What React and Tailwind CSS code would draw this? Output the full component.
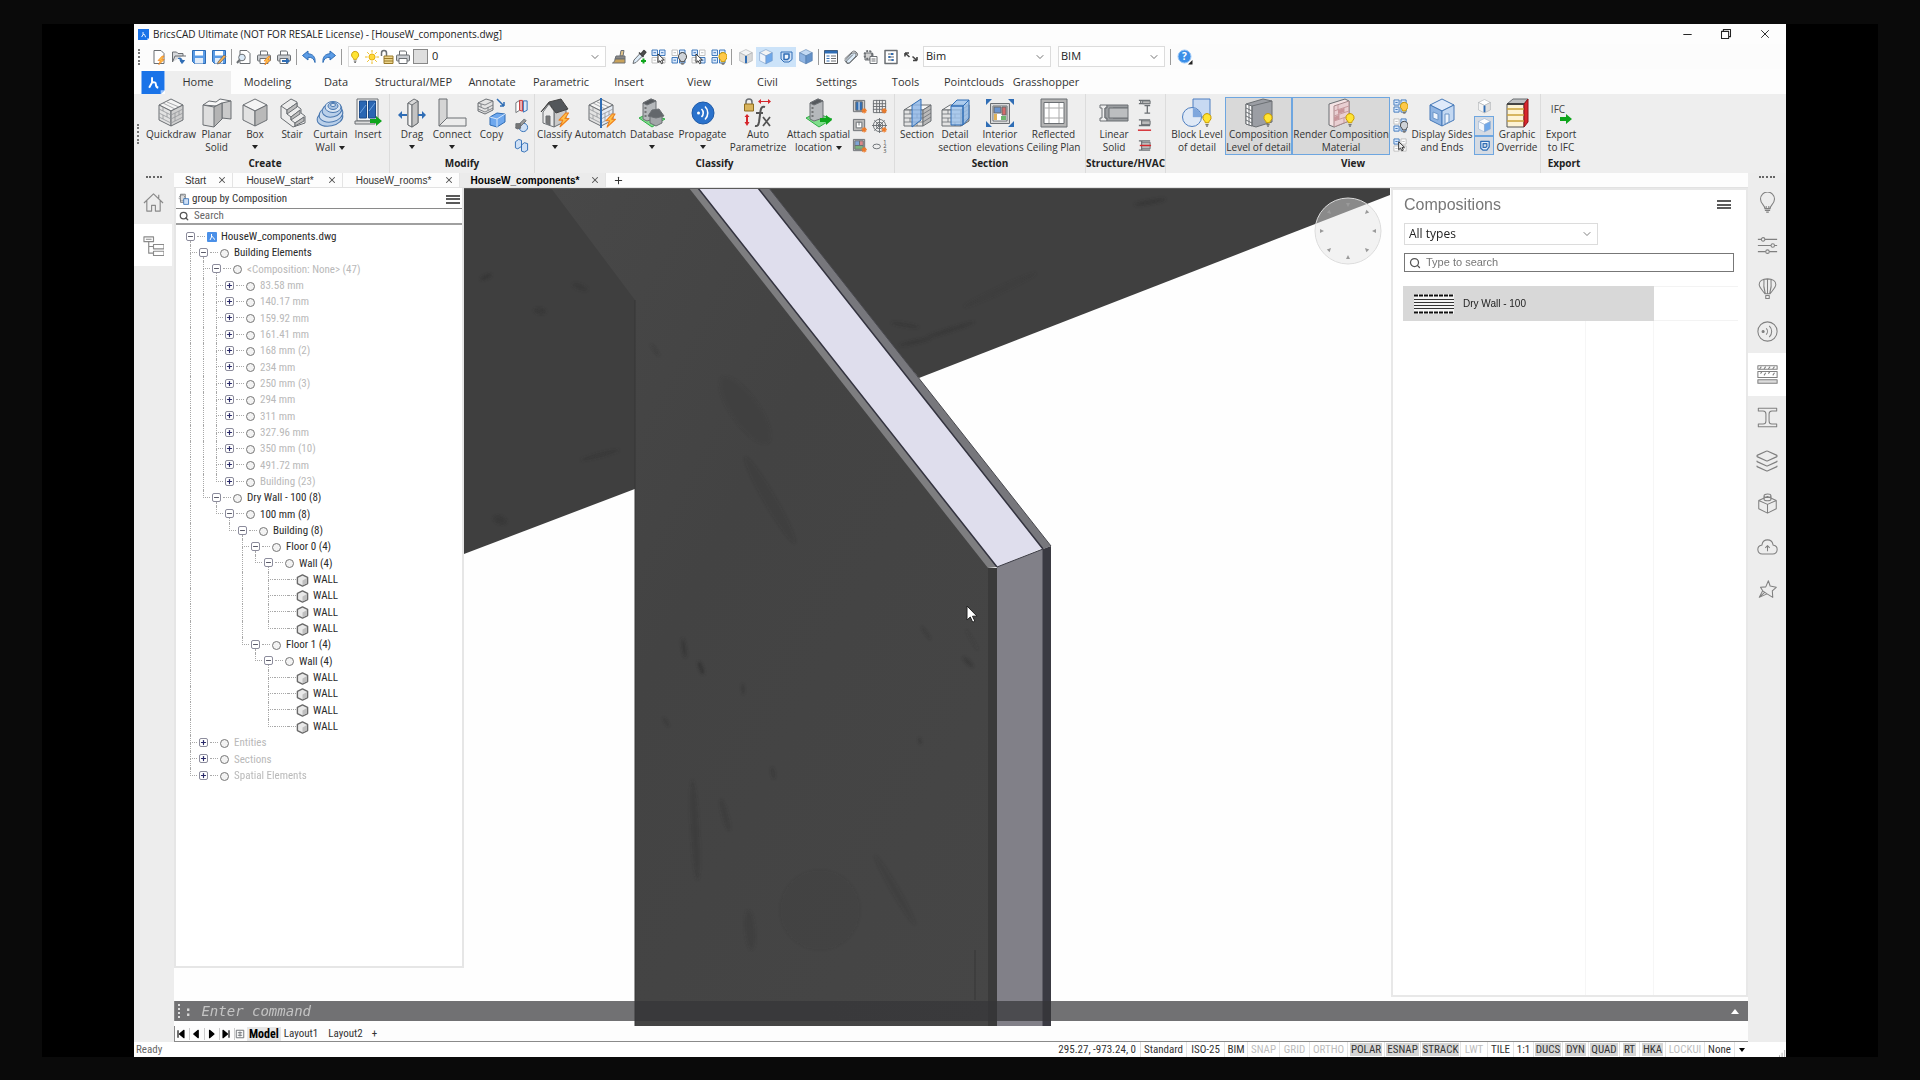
import React from "react";
import { ChevronDown, Layers, Minus, Plus, Search, X } from "lucide-react";

/* ---------- shared drawing helpers ---------- */
const G = "#6b6f73";
const B = "#2f6db5";

const Svg = ({ box = 16, className = "size-4", children, ...rest }) => (
  <svg viewBox={`0 0 ${box} ${box}`} className={`shrink-0 ${className}`} fill="none" stroke={G} strokeWidth="1" strokeLinejoin="round" aria-hidden="true" {...rest}>
    {children}
  </svg>
);

const Cube = ({ top = "#f4f4f4", left = "#e2e2e2", right = "#b9b9b9", line = G, transform }) => (
  <g stroke={line} transform={transform}>
    <path d="M15 1 27 7 15 13 3 7Z" fill={top} />
    <path d="M3 7 15 13V28L3 22Z" fill={left} />
    <path d="M27 7 15 13V28L27 22Z" fill={right} />
  </g>
);
const Bulb = ({ x = 0, y = 0, fill = "#ffe433", line = "#c99a00" }) => (
  <g transform={`translate(${x} ${y})`} stroke={line}>
    <path d="M5 .5a4.2 4.2 0 0 0-2.6 7.4c.6.6.8 1 .8 1.8h3.6c0-.8.2-1.2.8-1.8A4.2 4.2 0 0 0 5 .5Z" fill={fill} />
    <path d="M3.4 11.6h3.2M4 13.2h2" stroke="#777" strokeWidth="1.3" />
  </g>
);
const Bolt = ({ x = 0, y = 0, s = 1 }) => (
  <path transform={`translate(${x} ${y}) scale(${s})`} d="M6 0 0 6.5h3.4L1 12.5 9 5H5.4L8.6 0Z" fill="#ffc04a" stroke="#ef7f1a" />
);
const GreenArrow = ({ x = 0, y = 0 }) => (
  <path transform={`translate(${x} ${y})`} d="M0 3h6V0l6 5-6 5V7H0Z" fill="#0fa51c" stroke="none" />
);
const Spark = ({ x, y }) => (
  <path transform={`translate(${x} ${y})`} d="M3 0v6M0 3h6M1 1l4 4M5 1 1 5" stroke="#f07a26" strokeWidth="1.1" />
);

const Logo = ({ className }) => (
  <Svg box={24} className={className} stroke="none">
    <path d="M0 0H24V20L20 24H0Z" fill="#1a73e8" />
    <path d="M24 20 20 24V20Z" fill="#9cc5ff" />
    <path d="M11 6.500V12L8 17.500M11 12c3-1 4 .4 4 2 0 1.800.8 3 2.500 3.500" stroke="#fff" strokeWidth="2" />
  </Svg>
);

/* ---------- quick access toolbar icons ---------- */
const Page = ({ d = "M3 1.500h7l3 3v10H3Z" }) => <path d={d} fill="#fff" />;
const Printer = () => (
  <>
    <path d="M4.500 6V2h6l1 1v3" fill="#fff" />
    <rect x="1.500" y="6" width="13" height="6" rx="1" fill="#c9ccd0" />
    <rect x="4" y="9.500" width="8" height="5" fill="#fff" />
  </>
);
const Floppy = () => (
  <>
    <path d="M1.500 1.500h13v13h-11l-2-2Z" fill="#5b9ce6" stroke={B} />
    <rect x="4" y="2" width="8" height="4.500" fill="#fff" stroke="none" />
    <rect x="4" y="9" width="8" height="5.500" fill="#e3ecf7" stroke="none" />
  </>
);
const MiniGrid = ({ off = [] }) => (
  <g strokeWidth=".9">
    {[[1, 1], [8.5, 1], [1, 8.5], [8.5, 8.5]].map(([x, y], i) => (
      <g key={i} stroke={off.includes(i) ? "#b9b9b9" : B}>
        <rect x={x} y={y} width="5.500" height="5.500" fill={off.includes(i) ? "#fff" : "#dbeafd"} />
        <path d={`M${x + 1.5} ${y + 2.7}h2.500`} />
      </g>
    ))}
  </g>
);
const Cursor = ({ x = 0, y = 0, fill = "#fff" }) => (
  <path transform={`translate(${x} ${y})`} d="M0 0v8.500l2-1.800 1.500 3 1.500-.8-1.400-2.800 2.700-.2Z" fill={fill} stroke="#222" strokeWidth=".9" />
);

const TB = {
  "New": <><Page /><Bolt x={7} y={7} s={0.7} /></>,
  "Open": <><path d="M1.500 13V3h4l1.500 1.500h5V7" fill="#d7d9dc" /><path d="M1.500 13 4 7h11" /><path d="M7 9.500c3-1 4 0 4 2.500M9 11.500l2 3 2.500-3Z" stroke={B} fill={B} /></>,
  "Save": <Floppy />,
  "Save as": <><Floppy /><path d="m7 13 6-7 2 1.500-6 6.500-2.500 1Z" fill="#ffb14a" stroke="#777" /></>,
  "Preview": <><Page d="M4 1.500h7l3 3v10H4Z" /><circle cx="6" cy="8.500" r="3.300" fill="#dcebf8" /><path d="m3.500 11-2.500 3" strokeWidth="2" /></>,
  "Print": <><Printer /><Bolt x={8} y={7.5} s={0.7} /></>,
  "Publish": <><Printer /><path d="M6 11h4V9l4 3-4 3v-2H6Z" fill={B} stroke="none" /></>,
  "Undo": <path d="M7 2 1.500 6.500 7 11V8.300c4-.2 6 1.500 7 5.200.6-5.500-2-8.500-7-8.800Z" fill="#5b9ce6" stroke={B} />,
  "Redo": <path d="m9 2 5.500 4.500L9 11V8.300c-4-.2-6 1.500-7 5.200C1.400 8 4 5 9 4.700Z" fill="#5b9ce6" stroke={B} />,
  "Match properties": <><path d="M10 1.500 9 7h3l1-5.500Z" fill="#e2c48a" /><path d="M5 7h9v3H4Z" fill="#888" /><path d="M4 10h10v4H1.500c2-1 2.500-2.500 2.500-4Z" fill="#c9a25a" /></>,
  "Eyedropper": <><path d="M2 14.500 3 11l6-6.500 2.500 2.500-6.500 6.500Z" fill="#dcebf8" /><path d="m8 3.500 4.500 4.500M10 5l3-3.500 1.800 1.800L12 6.500" stroke="#444" fill="#555" strokeWidth="1.600" /><path d="M12.500 9.500v5M10 12h5" stroke="#0fa51c" strokeWidth="2" /></>,
  "Select similar": <><MiniGrid off={[2, 3]} /><Cursor x={7} y={5} /></>,
  "Hide": <><MiniGrid off={[0]} /><Bulb x={6.5} y={3} fill="#cfd3d8" line="#444" /></>,
  "Isolate": <><MiniGrid off={[1, 2]} /><Cursor x={5} y={5} /></>,
  "Show all": <><MiniGrid /><Bulb x={7} y={3} fill="#ffc94a" /></>,
  "Edge": <><g transform="scale(.53)"><Cube line="#a0a4a8" right="#d8d8d8" /></g><path d="M8 7v7" stroke={B} strokeWidth="2" /></>,
  "Face": <g transform="scale(.53)"><Cube right="#6fa8ea" line="#6d93c2" left="#eef4fc" /></g>,
  "Boundary": <><path d="M3 3h11v7.500L11 13H6L3 10Z" fill="#cfe2f8" stroke={B} /><path d="M6 5h5v4l-1.500 1.500H6Z" fill="#eef5fd" stroke={B} strokeWidth="1.500" /></>,
  "Solid": <g transform="scale(.53)"><Cube top="#c3d9f3" left="#8fb4e2" right="#6592c9" line="#4a74a6" /></g>,
  "Properties": <><rect x="1.500" y="1.500" width="13" height="13" fill="#fff" stroke="#555" /><path d="M1.500 3h13" stroke={B} strokeWidth="3" /><path d="M3.500 7h3M3.500 9.500h3M3.500 12h3" stroke={B} /><path d="M8 7h5M8 9.500h5M8 12h5" /></>,
  "Attach": <><path d="M2 11.500 9 4l4 0v3L6.500 14 4 14.500Z" fill="#dcebf8" /><path d="M1.500 10 9.500 2.500c1.500-1 3.500 0 4.500 1.500s.5 2.500 0 3L6.500 14c-1.500 1-3.500-.5-3-2L10 5.500" /></>,
  "Sheets": <><path d="M2 4h7v7H2Z" fill="#d3d3d3" /><circle cx="5.500" cy="6" r="4" strokeWidth="2" strokeDasharray="2 1.200" /><rect x="7" y="7.500" width="7" height="7" fill="#fff" /><path d="M8.500 10h4M8.500 12h4" /></>,
  "Options": <><rect x="2" y="1.500" width="12" height="13" fill="#fff" strokeWidth="1.500" /><path d="M5 5h6M5 8h6M5 11h6" /><path d="M9 4v2M6.500 7v2M9.500 10v2" stroke={B} strokeWidth="2" /></>,
  "Resize": <path d="M2 4h4M2 4v3.500M2 4l4.500 4M14 11.500h-4M14 11.500V8M14 11.500l-4.500-4" stroke="#444" strokeWidth="1.600" />,
  "Help": <><circle cx="7.500" cy="7.500" r="6.500" fill="#3b8fe8" stroke="#9cc8f7" /><text x="7.500" y="11" fontSize="10" fontWeight="700" textAnchor="middle" fill="#fff" stroke="none" className="font-['Open_Sans',sans-serif]">?</text><path d="M15.500 11v4.500H11Z" fill="#222" stroke="none" /></>,
};

const ToolBtn = ({ name, on }) => (
  <button type="button" aria-label={name} className={`flex h-5 w-5 items-center justify-center ${on ? "bg-[#cce3f9]" : ""}`}>
    <Svg>{TB[name]}</Svg>
  </button>
);
const Tools = ({ names, on = [] }) => names.map((n) => <ToolBtn key={n} name={n} on={on.includes(n)} />);
const Sep = () => <span className="mx-[2px] h-4 w-px bg-[#9a9a9a]" />;
const Grip = ({ className = "" }) => <span className={`border-l-2 border-dotted border-[#777] ${className}`} />;

const Combo = ({ label, value, className }) => (
  <label className={`flex h-[21px] items-center border border-[#dcdcdc] bg-white pr-1 ${className}`}>
    <select aria-label={label} className="min-w-0 flex-1 appearance-none bg-transparent pl-[2px] outline-none">
      <option>{value}</option>
    </select>
    <ChevronDown className="size-3 text-[#444]" strokeWidth={1.5} />
  </label>
);

function QuickToolbar() {
  return (
    <div className="flex h-[25px] items-center bg-[#fcfcfc] pl-1 text-[11px] text-[#222]">
      <Grip className="mr-[9px] h-4" />
      <Tools names={["New", "Open", "Save", "Save as"]} />
      <Sep />
      <Tools names={["Preview", "Print", "Publish"]} />
      <Sep />
      <Tools names={["Undo", "Redo"]} />
      <Sep />
      <div className="ml-1 flex h-[21px] w-[258px] items-center border border-[#dcdcdc] bg-white pr-1">
        <Svg className="size-[14px]"><Bulb x={2} y={1} /></Svg>
        <Svg className="ml-[2px] size-[14px]"><circle cx="8" cy="8" r="3.500" fill="#ffd83a" stroke="#e0a800" /><path d="M8 0v3M8 13v3M0 8h3M13 8h3M2.500 2.500l2 2M11.500 11.500l2 2M13.500 2.500l-2 2M4.500 11.500l-2 2" stroke="#e9b200" /></Svg>
        <Svg className="size-4"><path d="M2.500 7V4a2.500 2.500 0 0 1 5 0v3" strokeWidth="1.500" /><rect x="5" y="7" width="9" height="7.500" fill="#ecd58c" stroke="#9a7a2a" /><path d="M5 9.500h9M5 12h9" stroke="#9a7a2a" /></Svg>
        <Svg className="size-4"><Printer /></Svg>
        <span className="ml-[2px] size-[15px] border border-[#888] bg-[#dedede]" />
        <select aria-label="Layer" className="ml-1 min-w-0 flex-1 appearance-none bg-transparent outline-none">
          <option>0</option>
        </select>
        <ChevronDown className="size-3 text-[#444]" strokeWidth={1.5} />
      </div>
      <span className="w-[3px]" />
      <Tools names={["Match properties", "Eyedropper", "Select similar", "Hide", "Isolate", "Show all"]} />
      <Sep />
      <span className="w-[2px]" />
      <Tools names={["Edge", "Face", "Boundary", "Solid"]} on={["Face", "Boundary"]} />
      <Sep />
      <Tools names={["Properties", "Attach", "Sheets", "Options", "Resize"]} />
      <Combo label="Workspace" value="Bim" className="ml-[2px] w-[128px]" />
      <Combo label="Interface" value="BIM" className="ml-[7px] w-[107px]" />
      <span className="w-[3px]" />
      <Sep />
      <span className="w-[2px]" />
      <Tools names={["Help"]} />
    </div>
  );
}

/* ---------- ribbon icons (30 x 30) ---------- */
const brick = <path d="M3 11l12 6 12-6M3 15l12 6 12-6M3 19l12 6 12-6M7 9v4M11 15v4M7 17v4M19 15v4M23 13v4M19 19v4M11 4l12 5M7 5l12 6" stroke="#94979a" strokeWidth=".8" />;
const wallBlock = (
  <>
    <path d="M2 12 10 7H29L21 12Z" fill="#f5f5f5" />
    <path d="M2 12H21V28H2Z" fill="#e3e3e3" />
    <path d="M21 12 29 7V23L21 28Z" fill="#b9b9b9" />
    <path d="M2 16h19l8-5M2 20h19l8-5M2 24h19l8-5M8 12v4M15 16v4M8 20v4M15 24v4" strokeWidth=".8" />
  </>
);
const house = (
  <>
    <path d="M14 13 26 8V23L14 29Z" fill="#c9c9c9" />
    <path d="M3 14V25L14 29V13L9 6Z" fill="#eaeaea" />
    <path d="M1 14 9 4 21 1 28 11 16 15 9 5Z" fill="#53575b" stroke="#444" />
    <path d="M6 18h4v9l-4-2Z" fill="#777" />
  </>
);
const buildings = (
  <>
    <path d="M2 20 12 15 28 21 15 29Z" fill="#7fdc8b" stroke="#2fae45" />
    <path d="M6 5 14 1 19 3V20L10 23 6 21Z" fill="#b5b8bb" />
    <path d="M6 5 14 1 19 3 10 7Z" fill="#55595d" />
    <path d="M7.500 10h2M7.500 14h2M7.500 18h2" stroke="#333" />
  </>
);

const RI = {
  Quickdraw: <><Cube right="#cfcfcf" />{brick}</>,
  "Planar Solid": <><path d="M1 7 7 3 14 4 18 1 29 3 19 9 14 8Z" fill="#f7f7f7" /><path d="M1 7 12 9 20 5V21L12 29 1 27Z" fill="#dedede" /><path d="M20 5 29 3V21L20 20Z" fill="#cacaca" /><path d="M12 9 20 5V21L12 29Z" fill="#b4b4b4" /></>,
  Box: <Cube />,
  Stair: <><path d="M4 8 14 1 20 4V8l4 3v4l4 3v7L16 29 4 20Z" fill="#ededed" /><path d="M4 8 10 12 20 5M10 12v4l4 3 8-6M14 19v3l4 3 9-6M18 25v3.500" /><path d="M10 12 20 5v4l-10 7ZM14 19l9-7v4l-9 6ZM18 25l9-6v4l-9 5Z" fill="#bdbdbd" /></>,
  "Curtain Wall": <g stroke="#4a78b0"><ellipse cx="14" cy="20" rx="13" ry="8" fill="#b9cfe9" transform="rotate(-12 14 20)" /><ellipse cx="15" cy="16" rx="12" ry="8" fill="#cddcee" transform="rotate(-12 15 16)" /><ellipse cx="16" cy="12" rx="10" ry="7" fill="#b9cfe9" transform="rotate(-14 16 12)" /><ellipse cx="17" cy="9" rx="8" ry="5.500" fill="#dbe6f3" /><ellipse cx="17" cy="8" rx="5" ry="3.500" fill="#a9c3e2" /><ellipse cx="17" cy="7" rx="2.500" ry="1.500" fill="#e8eff8" /></g>,
  Insert: <><rect x="4" y="1" width="21" height="22" fill="#f3f3f3" /><rect x="6.500" y="3" width="7" height="17" fill="#2a66b3" stroke="#1c4b8a" /><rect x="15.500" y="3" width="7" height="17" fill="#2a66b3" stroke="#1c4b8a" /><path d="M7 15 13 7M16 13l6-8" stroke="#6fa3e0" /><rect x="2" y="23" width="20" height="3" fill="#ddd" /><GreenArrow x={17} y={18} /></>,
  Drag: <><path d="M11 5 17 1 21 3V25L15 29 11 27Z" fill="#d9d9d9" /><path d="M11 5 15 7V29L11 27Z" fill="#f4f4f4" /><path d="M15 7 21 3V25L15 29Z" fill="#c3c3c3" /><path d="M1 17 5 13V16H10V18H5V21ZM29 17 25 13V16H21V18H25V21Z" fill={B} stroke="none" /></>,
  Connect: <><path d="M2 1H10V20L2 28Z" fill="#d5d5d5" /><path d="M2 28 10 20H29V28Z" fill="#ececec" /></>,
  Copy: <><path d="M1 5 9 1 16 3V12L8 16 1 13Z" fill="#e3e3e3" /><path d="M1 8l7 3 8-4M1 11l7 3 8-4M4 6v3M11 9v3M1 5l7 2 8-4" strokeWidth=".8" /><path d="M20 1 27 8M27 8V4M27 8H23" stroke={B} strokeWidth="1.500" /><path d="M13 19 20 15 28 16V24L20 29 13 27Z" fill="#6ea8ee" stroke={B} /><path d="M13 19 20 21 28 16M20 21v8" stroke="#d5e6fa" /></>,
  Classify: <>{house}<Bolt x={19} y={15} s={1.1} /></>,
  Automatch: <><Cube right="#e5ecf5" />{brick}<path d="M15 0V30" stroke={B} strokeWidth="2" /><Bolt x={20} y={16} s={1.05} /></>,
  Database: <>{buildings}<path d="M13 17 20 12 25 18V25L19 28 13 25Z" fill="#a3a6a9" /><path d="M11 18 15 12 22 11 27 18 19 20Z" fill="#63676b" /></>,
  Propagate: <><circle cx="15" cy="15" r="11" fill="#2a72cc" stroke="#1f5ba8" /><circle cx="10.500" cy="15" r="1.500" fill="#fff" stroke="none" /><path d="M13.500 11a5.500 5.500 0 0 1 0 8M17 8.500a9 9 0 0 1 0 13" stroke="#fff" strokeWidth="1.600" /></>,
  "Auto Parametrize": <><path d="M3 6V4a3 3 0 0 1 6 0v2" strokeWidth="1.500" /><rect x="1.500" y="6" width="9" height="7" fill="#d9b45c" stroke="#8f6d1e" /><path d="M15 3.500 18 1V3h7V1l3 2.500L25 6V4H18V6ZM4 16l2.500 3H5v5h1.500L4 28l-2.500-4H3V19H1.500Z" fill="#d5262c" stroke="none" /><path d="M22 9c-3-1-4 1-4.500 4L16 24c-.5 3-1.500 4.500-4 4M13 15h7" stroke="#555" strokeWidth="2" /><path d="m20 19 7 9M27 19l-7 9" stroke="#555" strokeWidth="1.800" /></>,
  "Attach spatial location": <>{buildings}<GreenArrow x={16} y={17} /></>,
  Section: <>{wallBlock}<path d="M10 7 19 1V22L10 29Z" fill="#8db6e8" fillOpacity=".8" stroke={B} /></>,
  "Detail section": <>{wallBlock}<path d="M11 8 17 2H29L23 8ZM11 8H23V27H11ZM23 8 29 2V20L23 27Z" fill="#9cc3ee" fillOpacity=".8" stroke={B} /></>,
  "Interior elevations": <><path d="M1 1H7L1 7ZM29 1V7L23 1ZM1 29V23L7 29ZM29 29H23L29 23Z" fill={B} stroke="none" /><rect x="5.500" y="5.500" width="19" height="20" fill="#d9d9d9" /><rect x="8" y="8" width="14" height="15" fill="#fff" /><path d="M9 9h7v6H9Z" fill="#6a95cf" stroke="#666" /><path d="M17 9h4v8h-4Z" fill="#d46a6a" stroke="#666" /><path d="M9 16h3v6H9Z" fill="#e0b35a" stroke="none" /><path d="M16 18h5v4h-5Z" fill="#6fb76f" stroke="none" /></>,
  "Reflected Ceiling Plan": <><rect x="2" y="1" width="26" height="28" fill="#b5b5b5" /><rect x="5" y="4.500" width="20" height="21" fill="#fff" /><path d="M10 5v20M20 5v20M5 10h20M5 20h20" stroke="#aaa" /></>,
  "Linear Solid": <><path d="M1 7H8V10H6V20H8V23H1V20H3V10H1Z" fill="#eee" /><path d="M8 7H29V10H14V20H29V23H8V20H6V10H8Z" fill="#9a9da0" /><path d="M10 10H29V20H10Z" fill="#bcbec0" /></>,
  "Block Level of detail": <><path d="M11 1H28V19H11Z" fill="#c7d9f2" stroke="#4f7fc0" /><circle cx="10" cy="19" r="9.500" fill="#dbe7f8" fillOpacity=".8" stroke="#4f7fc0" /><path d="M11 10a9.500 9.500 0 0 1 8.500 9H11Z" fill="#7fa7dd" stroke="none" /><Bulb x={20} y={15} /></>,
  "Composition Level of detail": <><path d="M2 6 19 1 28 3V24L12 29 2 26Z" fill="#9b9ea4" /><path d="M2 6 8 8V28L2 26Z" fill="#fff" /><path d="M2 10l6 3M2 14l6 3M2 18l6 3M2 22l6 3M5 7v20" /><path d="M8 8 28 3M8 8V28" /><Bulb x={19} y={15} /></>,
  "Render Composition Material": <><path d="M3 6 19 1 23 3V23L8 29 3 27Z" fill="#f3e3e4" /><path d="M8 8 23 3V23L8 29Z" fill="#e9cfd2" stroke="#a98a8d" /><path d="M8 13l15-5M8 18l15-5M8 23l15-5M12 7v5M18 10v5M13 17v4M18 20v5" stroke="#c79b9f" /><path d="M12 12l6-2v4l-6 2ZM8 19l5-2v4l-5 2Z" fill="#c9969b" stroke="none" /><Bulb x={19} y={15} /></>,
  "Display Sides and Ends": <><Cube top="#dfeafa" left="#8fb4e2" right="#c3d8f2" line="#4679b8" /><path d="M18 16h4v8l-4 2ZM6 14l5 2v6l-5-2Z" fill="#eef4fc" stroke="#6c96c8" /></>,
  "Graphic Override": <><path d="M5 6 11 1H26L22 6Z" fill="#bfc1c3" /><path d="M5 6H22V29H5Z" fill="#fdf3d5" stroke="#555" /><path d="M22 6 26 1V24L22 29Z" fill="#d9262c" stroke="#8d1418" /><path d="M5 11h17M5 17h17M5 23h17" stroke="#caa23a" strokeWidth="1.500" /><path d="M5 6h17" stroke="#444" strokeWidth="2" /></>,
  "Export to IFC": <><text x="12" y="15" fontSize="10" textAnchor="middle" fill="#444" stroke="none" className="font-['Open_Sans',sans-serif]">IFC</text><GreenArrow x={14} y={16} /></>,
};

const SI = {
  "Thicken": <><path d="M2 4 6 1.500V12L2 14.500Z" fill="#fff" /><path d="M6 1.500h3V13L6 12Z" fill="#f2b8b8" stroke="#c33" /><path d="M10 2h4v10l-4 2Z" fill="#dbe8f8" stroke={B} /></>,
  "Trim": <><circle cx="10" cy="10" r="4.500" fill="#cfe0f5" stroke={B} /><path d="M2 10 11 1l2 2-9 9Z" fill="#999" /><path d="M2 6h5v5H2Z" fill="#777" /></>,
  "Mirror": <path d="M1.500 4 5 1.500l3 1V9L4 11.500l-2.500-1ZM8 7.500 11 5l3.500 1v7L11 15l-3-1Z" fill="#cfe0f5" stroke={B} />,
  "Window": <><rect x="1.500" y="1.500" width="12" height="12" fill="#ccc" /><path d="M4 3h7v9H4Z" fill={B} /><path d="M7.500 3v9" stroke="#fff" /><Spark x={10} y={9.5} /></>,
  "Room": <><rect x="1.500" y="1.500" width="12" height="12" fill="#bbb" /><path d="M4.500 4.500h6v6h-6Z" fill="#fff" /><path d="M7.500 4v4" /><Spark x={10} y={9.5} /></>,
  "Space": <><rect x="1.500" y="1.500" width="12" height="12" fill="#ccc" /><path d="M3 3h5v5H3Z" fill="#7ea4d4" /><path d="M8 3h4v5H8Z" fill="#d88" /><path d="M3 8h9v4H3Z" fill="#7bb27b" /><Spark x={10} y={9.5} /></>,
  "Grid": <><path d="M1.500 1.500h13v13h-13ZM5 1v14M8 1v14M11 1v14M1 5h14M1 8h14M1 11h14" /><Spark x={10} y={9.5} /></>,
  "Polar grid": <><circle cx="8" cy="8" r="6.500" /><circle cx="8" cy="8" r="3.500" /><path d="M8 0v16M0 8h16M2.500 2.500l11 11M13.500 2.500l-11 11" /><Spark x={10} y={9.5} /></>,
  "Numbering": <><ellipse cx="5" cy="9" rx="4" ry="2.500" /><text x="12" y="6" fontSize="6" fill="#444" stroke="none">1</text><text x="12" y="11" fontSize="6" fill="#444" stroke="none">2</text><text x="12" y="16" fontSize="6" fill="#444" stroke="none">3</text></>,
  "Profile": <><path d="M2 1.500h12M2 5h12M4 1.500V5M8 7h6M8 15h6M11 7v8" strokeWidth="1.400" /><path d="M6 2h8v3H6Z" fill="#bbb" /></>,
  "Flow": <><path d="M2 2h12M2 8h12M5 2v6" strokeWidth="1.400" /><path d="M5 3h9v4H5Z" fill="#bbb" /><path d="M1 13h14" stroke="#d5262c" strokeWidth="1.500" /></>,
  "Axis": <><path d="M2 3h12M2 13h12M5 3v10" strokeWidth="1.400" /><path d="M5 4.500h9v7H5Z" fill="#bbb" /><path d="M3 8h12" stroke="#d5262c" strokeWidth="1.500" /></>,
  "Show entities": <><MiniGrid /><Bulb x={7} y={3} fill="#ffc94a" /></>,
  "Hide entities": <><MiniGrid off={[0]} /><Bulb x={7} y={3} fill="#cfd3d8" line="#444" /></>,
  "Isolate entities": <><MiniGrid off={[1, 2, 3]} /><Cursor x={6} y={4} fill="#eee" /></>,
  "Edge display": <><g transform="scale(.53)"><Cube line="#a0a4a8" right="#e0e0e0" top="#fff" left="#f4f4f4" /></g><path d="M8 7v7" stroke={B} strokeWidth="2" /></>,
  "Face display": <g transform="scale(.53)"><Cube right="#6fa8ea" line="#8fabcc" left="#f4f8fd" top="#fff" /></g>,
  "Boundary display": <path d="M4 3.500h9v6L10.500 13H6.500L4 11ZM6.500 6v4h3l1-1V6Z" fill="#e4eefa" stroke={B} strokeWidth="1.300" />,
};

const Tri = ({ className = "border-t-[#222]" }) => <span className={`block size-0 border-x-[3px] border-t-[4px] border-x-transparent ${className}`} />;

const Big = ({ name, lines, w, drop, on }) => (
  <button type="button" className={`flex h-[58px] flex-col items-center border ${w} ${on ? "border-[#6ea6e0] bg-[#d9d9d9]" : "border-transparent"}`}>
    <Svg box={30} className="size-[30px]">{RI[name]}</Svg>
    {lines.map((l, i) => (
      <span key={l} className="flex items-center gap-1 leading-[13px] whitespace-nowrap">
        {l}
        {drop && i === 1 && <Tri />}
      </span>
    ))}
    {drop && lines.length === 1 && <span className="pt-1"><Tri /></span>}
  </button>
);

const Small = ({ names, w = "w-5", on = [] }) => (
  <div className={`flex h-[58px] flex-col ${w}`}>
    {names.map((n) => (
      <button key={n} type="button" aria-label={n} className={`flex flex-1 items-center justify-center border ${on.includes(n) ? "border-[#6ea6e0] bg-[#d5dbe3]" : "border-transparent"}`}>
        <Svg className="size-[15px]">{SI[n]}</Svg>
      </button>
    ))}
  </div>
);

const Group = ({ label, className = "pl-1", last, children }) => (
  <section className={`flex flex-col pt-[3px] pb-[2px] ${last ? "" : "border-r border-[#dcdcdc]"}`}>
    <div className={`flex ${className}`}>{children}</div>
    <h2 className="flex flex-1 items-center justify-center font-bold text-[#222]">{label}</h2>
  </section>
);

function Ribbon() {
  return (
    <div className="flex h-[79px] bg-[#eeeeee] text-[10px] text-[#333]">
      <div className="flex w-[7px] items-center justify-center"><Grip className="h-5" /></div>
      <Group label="Create" className="w-[248px] pl-1">
        <Big name="Quickdraw" lines={["Quickdraw"]} w="w-[52px]" />
        <Big name="Planar Solid" lines={["Planar", "Solid"]} w="w-[39px]" />
        <Big name="Box" lines={["Box"]} w="w-[38px]" drop />
        <Big name="Stair" lines={["Stair"]} w="w-9" />
        <Big name="Curtain Wall" lines={["Curtain", "Wall"]} w="w-[41px]" drop />
        <Big name="Insert" lines={["Insert"]} w="w-[34px]" />
      </Group>
      <Group label="Modify" className="w-36 pl-1">
        <Big name="Drag" lines={["Drag"]} w="w-9" drop />
        <Big name="Connect" lines={["Connect"]} w="w-11" drop />
        <Big name="Copy" lines={["Copy"]} w="w-[35px]" />
        <Small names={["Thicken", "Trim", "Mirror"]} w="w-6" />
      </Group>
      <Group label="Classify" className="w-[359px]">
        <Big name="Classify" lines={["Classify"]} w="w-[39px]" drop />
        <Big name="Automatch" lines={["Automatch"]} w="w-[53px]" />
        <Big name="Database" lines={["Database"]} w="w-[50px]" drop />
        <Big name="Propagate" lines={["Propagate"]} w="w-[51px]" drop />
        <Big name="Auto Parametrize" lines={["Auto", "Parametrize"]} w="w-[60px]" />
        <Big name="Attach spatial location" lines={["Attach spatial", "location"]} w="w-[61px]" drop />
        <Small names={["Window", "Room", "Space"]} />
        <Small names={["Grid", "Polar grid", "Numbering"]} />
      </Group>
      <Group label="Section" className="w-[190px] pl-[3px]">
        <Big name="Section" lines={["Section"]} w="w-[38px]" />
        <Big name="Detail section" lines={["Detail", "section"]} w="w-[38px]" />
        <Big name="Interior elevations" lines={["Interior", "elevations"]} w="w-[52px]" />
        <Big name="Reflected Ceiling Plan" lines={["Reflected", "Ceiling Plan"]} w="w-[55px]" />
      </Group>
      <Group label="Structure/HVAC" className="w-[79px] pl-2">
        <Big name="Linear Solid" lines={["Linear", "Solid"]} w="w-10" />
        <Small names={["Profile", "Flow", "Axis"]} />
      </Group>
      <Group label="View" className="w-[374px] pl-[3px]">
        <Big name="Block Level of detail" lines={["Block Level", "of detail"]} w="w-14" />
        <Big name="Composition Level of detail" lines={["Composition", "Level of detail"]} w="w-[67px]" on />
        <Big name="Render Composition Material" lines={["Render Composition", "Material"]} w="w-[98px]" on />
        <Small names={["Show entities", "Hide entities", "Isolate entities"]} />
        <Big name="Display Sides and Ends" lines={["Display Sides", "and Ends"]} w="w-16" />
        <Small names={["Edge display", "Face display", "Boundary display"]} on={["Face display", "Boundary display"]} />
        <Big name="Graphic Override" lines={["Graphic", "Override"]} w="w-[46px]" />
      </Group>
      <Group label="Export" className="w-[46px]" last>
        <Big name="Export to IFC" lines={["Export", "to IFC"]} w="w-10" />
      </Group>
    </div>
  );
}

const ribbonTabs = [
  ["Home", "w-[66px]"], ["Modeling", "w-[73px]"], ["Data", "w-16"], ["Structural/MEP", "w-[91px]"], ["Annotate", "w-[66px]"],
  ["Parametric", "w-[72px]"], ["Insert", "w-16"], ["View", "w-[76px]"], ["Civil", "w-[61px]"], ["Settings", "w-[77px]"],
  ["Tools", "w-[61px]"], ["Pointclouds", "w-[76px]"], ["Grasshopper", "w-[68px]"],
];

/* ---------- structure tree ---------- */
const walls = () => [0, 1, 2, 3].map(() => ({ t: "WALL", leaf: true }));
const floor = (n) => ({ t: `Floor ${n} (4)`, c: [{ t: "Wall (4)", c: walls() }] });
const tree = {
  t: "HouseW_components.dwg", root: true, c: [
    {
      t: "Building Elements", c: [
        {
          t: "<Composition: None> (47)", dim: true,
          c: ["83.58 mm", "140.17 mm", "159.92 mm", "161.41 mm", "168 mm (2)", "234 mm", "250 mm (3)", "294 mm", "311 mm", "327.96 mm", "350 mm (10)", "491.72 mm", "Building (23)"].map((t) => ({ t, dim: true })),
        },
        { t: "Dry Wall - 100 (8)", c: [{ t: "100 mm (8)", c: [{ t: "Building (8)", c: [floor(0), floor(1)] }] }] },
      ],
    },
    { t: "Entities", dim: true }, { t: "Sections", dim: true }, { t: "Spatial Elements", dim: true },
  ],
};
const flatten = (node, guides = [], last = true, out = []) => {
  out.push({ ...node, guides, last });
  (node.c || []).forEach((k, i) => flatten(k, node.root ? [] : [...guides, !last], i === node.c.length - 1, out));
  return out;
};
const rows = flatten(tree);

const dots = "border-dotted border-[#a8a8a8]";
function TreeRow({ n }) {
  return (
    <li className="flex h-4 items-stretch nth-[3n]:h-[17px]">
      {n.guides.map((g, i) => (
        <span key={i} className="w-[13px] pl-[6px]"><span className={`block h-full ${g ? `border-l ${dots}` : ""}`} /></span>
      ))}
      {!n.root && (
        <span className="flex w-[13px] flex-col pl-[6px]">
          <span className={`h-2 border-b border-l ${dots}`} />
          <span className={`flex-1 ${n.last ? "" : `border-l ${dots}`}`} />
        </span>
      )}
      {n.leaf ? (
        <span className={`h-2 w-[13px] border-b ${dots}`} />
      ) : (
        <span className="flex w-[13px] flex-col items-center">
          <span className="h-[3px]" />
          <button type="button" aria-label={`${n.c ? "Collapse" : "Expand"} ${n.t}`} className="flex size-[9px] items-center justify-center rounded-[2px] border border-[#8c8c9c] bg-white">
            {n.c ? <Minus className="size-[7px] text-[#445]" strokeWidth={3} /> : <Plus className="size-[7px] text-[#2a2a6a]" strokeWidth={4} />}
          </button>
          <span className={`flex-1 ${n.c ? `border-l ${dots}` : ""}`} />
        </span>
      )}
      <span className={`h-2 w-2 border-b ${dots}`} />
      <span className="flex items-center">
        {n.root && <Svg box={10} className="mr-1 ml-[2px] h-3 w-[10px]" stroke="none"><rect width="10" height="10" rx="1" fill="#4a90e8" /><path d="M4.500 2v3L3 8M4.500 4.500c2-.5 1.500 2.500 3.500 3" stroke="#fff" /></Svg>}
        {n.leaf && (
          <Svg box={14} className="mr-1 size-[13px]" stroke="none">
            <path d="M7 1 12.500 3.700V10.300L7 13 1.500 10.300V3.700Z" fill="#e9e9e9" stroke="#6a6a6a" strokeWidth="1.500" />
            <path d="M11.800 4.200V10L7 12.300V7Z" fill="#bfbfbf" />
          </Svg>
        )}
        {!n.root && !n.leaf && <span className="mr-[5px] ml-[2px] size-[9px] rounded-full border border-[#777] bg-[#f3f3f3]" />}
        <span className={`leading-4 whitespace-nowrap ${n.dim ? "text-[#b9b9b9]" : "text-[#2a2a2a]"}`}>{n.t}</span>
      </span>
    </li>
  );
}

const Burger = ({ className }) => (
  <button type="button" aria-label="Panel menu" className={`flex h-[9px] w-[14px] flex-col justify-between ${className}`}>
    {[0, 1, 2].map((i) => <span key={i} className="h-[2px] w-full bg-[#5a5a5a]" />)}
  </button>
);

function StructurePanel() {
  return (
    <aside className="mb-[33px] w-[290px] border-r-2 border-b-2 border-l-2 border-[#e6e6e6] bg-white font-['Roboto_Condensed',Roboto,sans-serif] text-[11px]">
      <header className="flex h-[21px] items-center border-b border-[#8a8a8a] px-[2px] pt-[2px] text-[#333]">
        <Svg className="size-[13px]"><path d="M3 1.500h6v10H3Z" fill="#ddd" /><circle cx="5" cy="6" r="3.500" strokeDasharray="2 1" /><path d="M7 7h6v7H7Z" fill="#cfe0f5" stroke={B} /></Svg>
        <span className="ml-px">group by Composition</span>
        <Burger className="ml-auto" />
      </header>
      <label className="flex h-4 items-center border-b-2 border-[#a0a0a0] pl-[3px]">
        <Search className="size-[10px] text-[#555]" strokeWidth={3} />
        <input aria-label="Search" placeholder="Search" className="ml-[5px] min-w-0 flex-1 bg-transparent leading-4 outline-none placeholder:text-[#666]" />
      </label>
      <ul className="pt-1 pl-2">{rows.map((n, i) => <TreeRow key={i} n={n} />)}</ul>
    </aside>
  );
}

/* ---------- compositions panel ---------- */
function CompositionsPanel() {
  return (
    <aside className="mb-1 flex w-[357px] flex-col border-2 border-[#e8e8e8] bg-white font-['Liberation_Sans',Arial,sans-serif] text-[11px]">
      <header className="flex h-[33px] items-center pr-[15px] pb-1 pl-[11px]">
        <h1 className="text-base text-[#777]">Compositions</h1>
        <Burger className="ml-auto" />
      </header>
      <label className="ml-[11px] flex h-[22px] w-[194px] items-center border border-[#dcdcdc] pr-1">
        <select aria-label="Type filter" className="flex-1 appearance-none bg-transparent pl-1 font-['Open_Sans',sans-serif] text-xs text-[#222] outline-none">
          <option>All types</option>
        </select>
        <ChevronDown className="size-3 text-[#555]" strokeWidth={1.5} />
      </label>
      <label className="mt-2 mr-3 ml-[11px] flex h-[19px] items-center border border-[#777] pl-1">
        <Search className="size-3 text-[#555]" strokeWidth={2.5} />
        <input aria-label="Type to search" placeholder="Type to search" className="ml-[5px] min-w-0 flex-1 bg-transparent outline-none placeholder:text-[#777]" />
      </label>
      <div className="mt-[14px] mr-2 ml-[10px] grid flex-1 grid-cols-[183px_68px_1fr] grid-rows-[35px_1fr]">
        <button type="button" className="col-span-2 flex items-center bg-[#d8d8d8] pl-[11px] text-[#222]">
          <svg viewBox="0 0 40 20" className="h-5 w-10" aria-hidden="true">
            <rect width="40" height="20" fill="#f4f4f4" />
            <path d="M0 1.500H40M0 18.500H40" stroke="#111" strokeWidth="2" strokeDasharray="4 1" />
            <path d="M0 5.500H40M0 8.500H40M0 11.500H40M0 14.500H40" stroke="#333" />
          </svg>
          <span className="ml-[9px] text-[10px]">Dry Wall - 100</span>
        </button>
        <span className="border-y border-[#f3f3f3]" />
        <span className="border-r border-[#f6f6f6]" />
        <span className="border-r border-[#f6f6f6]" />
      </div>
    </aside>
  );
}

/* ---------- 3D scene ---------- */
/* small dark marks in the plaster: x, y, rx, ry, angle, opacity */
const streaks = [
  [684, 648, 2, 10, -8, 0.6], [701, 668, 2, 7, -20, 1], [743, 689, 1, 5, -5, 1], [666, 722, 1, 5, -30, 0.7], [920, 741, 1, 3, -15, 1],
  [926, 633, 1, 8, -35, 0.6], [968, 662, 2, 7, -45, 0.6], [972, 640, 1, 12, -30, 0.3], [773, 773, 2, 6, -10, 0.4],
  [695, 830, 4, 50, -3, 0.35], [725, 815, 3, 16, -15, 0.35], [750, 930, 5, 20, -5, 0.3], [895, 890, 4, 40, -30, 0.2], [820, 910, 40, 40, 0, 0.12],
  [486, 277, 6, 2, -25, 0.8], [580, 287, 8, 3, 20, 0.4], [540, 311, 6, 3, 10, 0.5], [600, 455, 20, 2, -15, 0.4], [500, 520, 7, 4, 20, 0.5],
  [745, 410, 14, 40, -35, 0.25], [770, 500, 6, 50, -30, 0.2], [655, 350, 1, 7, -35, 0.6],
  [950, 330, 26, 2, -18, 0.5], [915, 342, 16, 2, -12, 0.5], [905, 325, 14, 2, 10, 0.4], [1150, 202, 16, 2, -10, 0.6], [1000, 290, 40, 3, -25, 0.25],
];
function Scene() {
  return (
    <svg viewBox="174 188 1574 838" preserveAspectRatio="xMidYMid slice" className="absolute inset-0 size-full" role="img" aria-label="Drywall model">
      <defs>
        <filter id="soft" x="-50%" y="-50%" width="200%" height="200%"><feGaussianBlur stdDeviation="1.500" /></filter>
        <linearGradient id="face" x1="0" y1="0" x2="1" y2="1">
          <stop offset="0" stopColor="#484848" /><stop offset=".4" stopColor="#434343" /><stop offset="1" stopColor="#464646" />
        </linearGradient>
      </defs>
      <rect x="174" y="188" width="1574" height="838" fill="#fefefe" />
      <path d="M464 188H640V487L464 554Z" fill="#3f3f3f" />
      <path d="M760 188H1390V195L919 378Z" fill="#404040" />
      <path d="M551 188H692L989 568V1026H635V300Z" fill="url(#face)" />
      <path d="M635 300V1026" stroke="#363636" fill="none" />
      <g fill="#2a2a2a" opacity=".6" filter="url(#soft)">
        {streaks.map(([x, y, rx, ry, a, o]) => <ellipse key={`${x}-${y}`} cx={x} cy={y} rx={rx} ry={ry} opacity={o} transform={`rotate(${a} ${x} ${y})`} />)}
      </g>
      <path d="M689 188H698L997 567 988 568Z" fill="#7e7e80" />
      <path d="M698 188H758L1043 548 997 567Z" fill="#dfdeed" />
      <path d="M758 188H769L1051 546 1043 549Z" fill="#77777c" />
      <path d="M698 188 997 567M758 188 1043 549" stroke="#33333f" strokeWidth="1.500" fill="none" />
      <path d="M769 188 1051 546" stroke="#4a4a50" fill="none" />
      <path d="M988 568H997V1026H988Z" fill="#3a3a3a" />
      <path d="M997 567 1043 549V1026H997Z" fill="#818088" />
      <path d="M1043 549 1051 546V1026H1043Z" fill="#3a3a42" />
      <path d="M997 567 1043 549M1043 549V1026" stroke="#3b3b45" fill="none" />
      <path d="M975 950V1000" stroke="#363636" />
      <path d="M464 188.500H1390" stroke="#5a5a5a" />
      <circle cx="1348" cy="231" r="33" fill="#e4e4e4" fillOpacity=".45" stroke="#dcdcdc" />
      <g fill="#9a9a9a">
        {[0, 45, 90, 135, 180, 225, 270, 315].map((a) => <path key={a} d="M1346 203h4l-2 4Z" transform={`rotate(${a} 1348 231)`} />)}
      </g>
      <path d="M967 606v14l3.300-3 2.400 5.200 2.200-1-2.400-5h4.500Z" fill="#fff" stroke="#222" />
    </svg>
  );
}

/* ---------- side bars ---------- */
const sideIcons = [
  ["Tips", <path key="a" d="M9 19c0-4-5-5.500-5-11a8 8 0 0 1 16 0c0 5.500-5 7-5 11ZM9 21h6M10.500 23h3M10.500 19v-3M13.500 19v-3" />],
  ["Properties", <g key="a"><path d="M1 5h4M9 5h14M1 12h15M20 12h3M1 19h9M14 19h9" /><circle cx="7" cy="5" r="2" /><circle cx="18" cy="12" r="2" /><circle cx="12" cy="19" r="2" /></g>],
  ["Mechanical", <g key="a"><path d="M12 1C6 1 2.500 3.500 2.500 7.500 2.500 11 7 15 9 18h6c2-3 6.500-7 6.500-10.500C21.500 3.500 18 1 12 1ZM9.500 18C8 13 7 9 8 2M14.500 18c1.500-5 2.500-9 1.500-16M12 1v17" /><rect x="10" y="20" width="4" height="3.500" /></g>],
  ["Propagate", <g key="a"><circle cx="12" cy="12" r="11" /><circle cx="7" cy="12" r="1.200" fill="#777" /><path d="M10.500 8.500a5 5 0 0 1 0 7M14 5.500a9 9 0 0 1 0 13" /></g>],
  ["Compositions", <g key="a"><rect x="1" y="2" width="22" height="4" /><rect x="1" y="8.500" width="22" height="7" /><rect x="1" y="18" width="22" height="4" fill="#ddd" /><path d="M3 5.500 5 3M8 5.500 10 3M13 5.500 15 3M18 5.500 20 3M4 11l1.500-2M8 13l2-3M13 11l1.500-2M18 13l2-3" /></g>],
  ["Profiles", <path key="a" d="M1.500 1.500h21V4.500H17c-2 0-3.200 1.500-3.200 3.500v8c0 2 1.200 3.500 3.200 3.500h5.500v3h-21v-3H7c2 0 3.200-1.500 3.200-3.500V8c0-2-1.200-3.500-3.200-3.500H1.500Z" />],
  ["Layers", null],
  ["Components", <g key="a"><path d="M12 4 22 8.500V18L12 23 2 18V8.500ZM2 8.500 12 13 22 8.500M12 13V23" /><path d="M8 7V3.500c0-3 8-3 8 0V7c0 2.500-8 2.500-8 0ZM8 3.500c0 2.200 8 2.200 8 0" /></g>],
  ["Cloud", <path key="a" d="M6 20.500a5 5 0 0 1-1-9.900 1 1 0 0 0 .8-1 6.300 6.300 0 0 1 12.400 0 1 1 0 0 0 .8 1 5 5 0 0 1-1 9.900ZM12 17.500v-6.500M9.500 13.500 12 11l2.500 2.500" />],
  ["Sheet pins", <path key="a" d="M13 2 15 8 22 9.500 17.500 13.500 18 21 11.500 17 2.500 21 6.500 13.500 4 9.500 10 9ZM6.500 13.500 11.500 17M2.500 21 9 15" />],
];

function RightBar() {
  return (
    <nav className="flex w-[38px] shrink-0 flex-col items-center bg-[#ededed]">
      <span className="mt-[3px] mb-[3px] w-4 border-t-2 border-dotted border-[#666]" />
      {sideIcons.map(([name, d]) => (
        <button key={name} type="button" aria-label={name} className={`flex h-[43px] w-full items-center justify-center ${name === "Compositions" ? "bg-white" : ""}`}>
          {name === "Layers" && <Layers className="size-6 text-[#808080]" strokeWidth={1.2} />}
          {d && <Svg box={24} className="size-[21px]" stroke="#808080" strokeWidth="1.200">{d}</Svg>}
        </button>
      ))}
    </nav>
  );
}

function LeftBar() {
  return (
    <nav className="flex w-10 shrink-0 flex-col items-center bg-[#ededed]">
      <span className="mt-[3px] mb-[3px] w-4 border-t-2 border-dotted border-[#666]" />
      <button type="button" aria-label="Home" className="flex h-[43px] w-full items-center justify-center pr-[2px]">
        <Svg box={22} className="size-[21px]" stroke="#8a8a8a" strokeWidth="1.200"><path d="M1 11.500 11 2 21 11.500M4 9v11h5v-6h4v6h5V9M16.500 6.500V3" /></Svg>
      </button>
      <button type="button" aria-label="Structure" className="mr-[2px] flex h-[42px] w-[38px] items-center justify-center bg-white">
        <Svg box={22} className="size-[21px]" stroke="#8a8a8a" strokeWidth="1.200"><path d="M1 2h10v5H1ZM3 4.500h6M6 7v12h5M6 12h5" /><rect x="11" y="10" width="11" height="4.500" /><rect x="11" y="17" width="11" height="4.500" /></Svg>
      </button>
    </nav>
  );
}

const docTabs = [["Start", "w-[59px]"], ["HouseW_start*", "w-[110px]"], ["HouseW_rooms*", "w-[117px]"], ["HouseW_components*", "w-[146px]"]];
const statusItems = [
  ["Standard", "w-[46px]"], ["ISO-25", "w-[38px]"], ["BIM", "w-[23px]"], ["SNAP", "w-8", "off"], ["GRID", "w-[30px]", "off"], ["ORTHO", "w-[38px]", "off"],
  ["POLAR", "w-[37px]", "on"], ["ESNAP", "w-9", "on"], ["STRACK", "w-10", "on"], ["LWT", "w-[27px]", "off"], ["TILE", "w-[26px]"], ["1:1", "w-[20px]"],
  ["DUCS", "w-[29px]", "on"], ["DYN", "w-[26px]", "on"], ["QUAD", "w-[31px]", "on"], ["RT", "w-5", "on"], ["HKA", "w-[26px]", "on"], ["LOCKUI", "w-[39px]", "off"], ["None", "w-[30px]"],
];
const navIcons = [
  ["First layout", "M4 3v10M12 3v10L6 8Z"], ["Previous layout", "M11 3v10L5 8Z"], ["Next layout", "M6 3v10l6-5Z"], ["Last layout", "M4 3v10l6-5ZM12 3v10"],
];

export default function App() {
  return (
    <div className="h-screen w-full bg-[#0a0a0a] px-[42px] pt-6 pb-[23px] font-['Open_Sans','Noto_Sans',sans-serif]">
      <div className="h-full bg-black px-[92px]">
        <div className="flex h-full flex-col overflow-hidden bg-[#fdfdfd]">
          <header className="flex h-5 items-center pl-1 text-[10px] text-[#222]">
            <Logo className="size-[11px]" />
            <span className="ml-1">BricsCAD Ultimate (NOT FOR RESALE License) - [HouseW_components.dwg]</span>
            <div className="ml-auto flex items-center gap-[26px] pr-[14px] text-[#222]">
              <button type="button" aria-label="Minimize"><Minus className="size-[13px]" strokeWidth={1.8} /></button>
              <button type="button" aria-label="Restore"><Svg className="size-3" stroke="#222" strokeWidth="1.400"><path d="M2 4.500h9.500V14H2ZM4.500 4.500V2H14v9.500h-2.500" /></Svg></button>
              <button type="button" aria-label="Close"><X className="size-[14px]" strokeWidth={1.6} /></button>
            </div>
          </header>
          <QuickToolbar />
          <nav className="flex h-[25px] items-end pl-[7px] text-[11px] text-[#333]">
            <button type="button" aria-label="BricsCAD menu"><Logo className="block h-[23px] w-6" /></button>
            {ribbonTabs.map(([t, w], i) => (
              <button key={t} type="button" className={`flex h-[23px] items-center justify-center whitespace-nowrap ${w} ${i === 0 ? "bg-[#eeeeee]" : ""}`}>{t}</button>
            ))}
          </nav>
          <Ribbon />

          <div className="flex min-h-0 flex-1">
            <LeftBar />
            <main className="flex min-w-0 flex-1 flex-col">
              <div className="flex h-[15px] items-stretch border-b border-[#e2e2e2] font-['Liberation_Sans',Arial,sans-serif] text-[10px] text-[#333]">
                {docTabs.map(([t, w], i) => (
                  <div key={t} className={`flex items-center border-r border-[#e4e4e4] pr-[5px] ${w} ${i === 3 ? "bg-[#ebebeb] font-bold text-black" : ""}`}>
                    <button type="button" className="flex-1 text-center">{t}</button>
                    <button type="button" aria-label={`Close ${t}`}><X className="size-[10px] text-[#555]" strokeWidth={2.5} /></button>
                  </div>
                ))}
                <button type="button" aria-label="New drawing" className="flex w-6 items-center justify-center"><Plus className="size-[11px]" strokeWidth={2.2} /></button>
              </div>
              <div className="relative flex min-h-0 flex-1 flex-col">
                <Scene />
                <div className="relative flex min-h-0 flex-1 items-stretch justify-between">
                  <StructurePanel />
                  <CompositionsPanel />
                </div>
                <label className="relative mb-[5px] flex h-5 items-center border-l border-[#888] bg-[#353538]/70 pr-[9px] pl-[3px] font-['DejaVu_Sans_Mono','Liberation_Mono',monospace] text-sm text-[#d8d8d8]">
                  <Grip className="h-[14px] border-[#ddd]" />
                  <span className="ml-1 font-bold">:</span>
                  <input aria-label="Command" placeholder="Enter command" className="ml-[9px] min-w-0 flex-1 bg-transparent italic outline-none placeholder:text-[#c4c4c4]" />
                  <span className="size-0 border-x-4 border-b-[5px] border-x-transparent border-b-white" />
                </label>
              </div>
              <div className="flex h-4 items-center border-b border-l border-[#8a8a8a] pt-px font-['Roboto_Condensed',Roboto,sans-serif] text-[11px] text-[#333]">
                {navIcons.map(([n, d]) => (
                  <button key={n} type="button" aria-label={n} className="flex w-[15px] border-r border-[#ccc]">
                    <Svg className="size-3" stroke="#000" strokeWidth="1.500"><path d={d} fill="#000" /></Svg>
                  </button>
                ))}
                <button type="button" aria-label="Layout list" className="flex w-3">
                  <Svg className="size-[10px]"><rect x="2" y="2" width="12" height="12" strokeWidth="1.500" /><path d="M4.500 6h7M4.500 10h7M8 4v8" strokeWidth="1.500" /></Svg>
                </button>
                <button type="button" className="bg-[#e6e6e6] px-[2px] text-xs leading-[14px] font-bold text-black">Model</button>
                <button type="button" className="pr-[5px] pl-[3px]">Layout1</button>
                <button type="button" className="px-[5px]">Layout2</button>
                <button type="button" aria-label="Add layout" className="px-1">+</button>
              </div>
            </main>
            <RightBar />
          </div>

          <footer className="flex h-[15px] items-stretch bg-white pl-[2px] font-['Roboto_Condensed',Roboto,sans-serif] text-[11px] leading-[15px] text-[#333]">
            <span className="text-[#666]">Ready</span>
            <span className="ml-auto border-r border-[#ddd] pr-1">295.27, -973.24, 0</span>
            {statusItems.map(([t, w, s]) => (
              <button key={t} type="button" className={`flex items-center justify-center border-r border-[#e4e4e4] ${w} ${s === "off" ? "text-[#bdbdbd]" : ""}`}>
                <span className={s === "on" ? "bg-[#d6d6d6] px-px leading-[13px]" : ""}>{t}</span>
              </button>
            ))}
            <button type="button" aria-label="Status bar options" className="flex w-[14px] items-center justify-center"><Tri className="border-t-black" /></button>
            <span className="ml-[30px] flex items-end"><Svg box={8} className="size-[7px]" stroke="none"><path d="M6 0h1v8H6ZM3 3h1v5H3ZM0 6h1v2H0Z" fill="#aaa" /></Svg></span>
          </footer>
        </div>
      </div>
    </div>
  );
}
